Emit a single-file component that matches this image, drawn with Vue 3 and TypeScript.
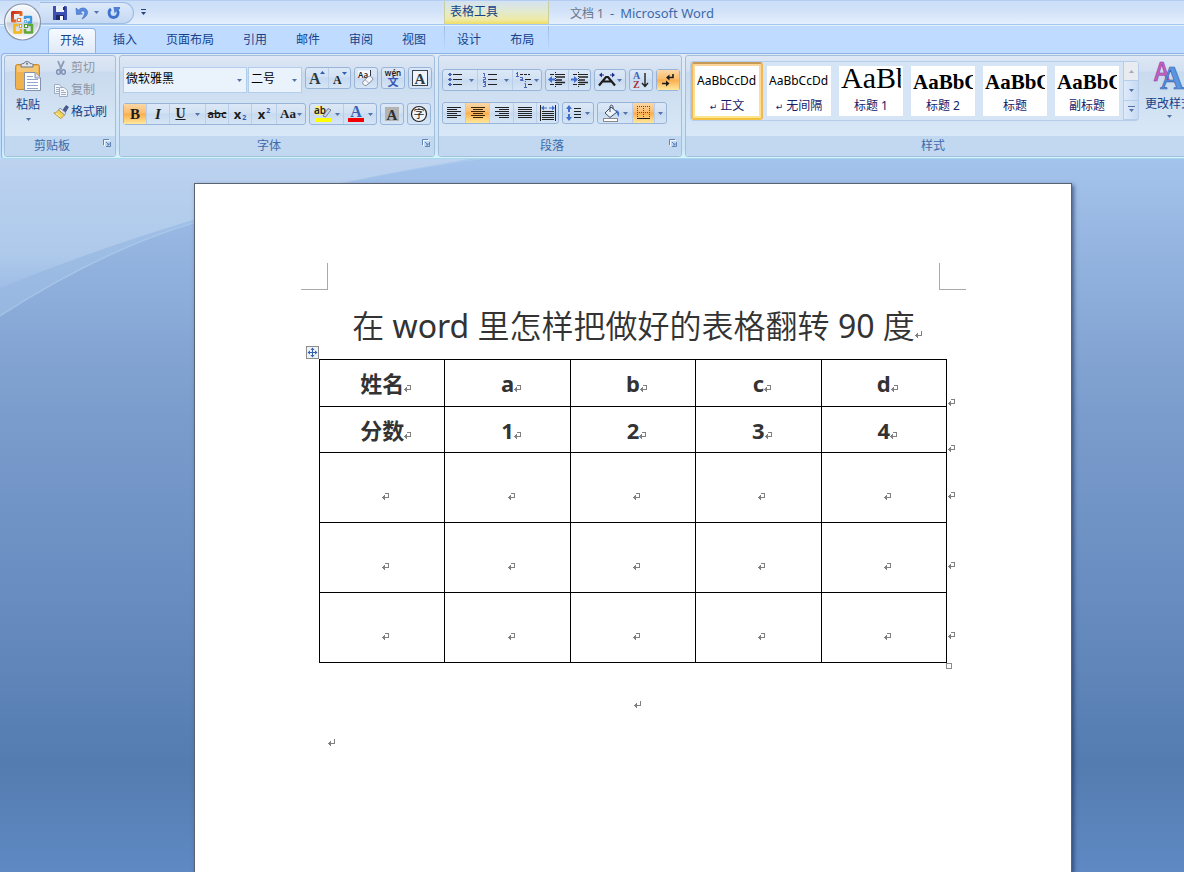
<script setup lang="ts">
import { h, ref } from 'vue'

interface StyleItem {
  name: string
  sample: string
  kind: string
  mark: boolean
}

const Caret = () =>
  h('svg', { class: 'caret', viewBox: '0 0 5 3', width: 5, height: 3, 'aria-hidden': 'true' }, [
    h('path', { d: 'M0 0H5L2.5 3Z', fill: '#5273a8' }),
  ])

const CellMark = () =>
  h('svg', { class: 'mark', viewBox: '0 0 7 7', width: 7, height: 7, 'aria-hidden': 'true' }, [
    h('path', { d: 'M3 0H7V5H3V7H2V6H1V5H0V4H1V3H2V2H3V4H6V1H3Z', fill: '#808080' }),
  ])

const ParaMark = () =>
  h('svg', { class: 'mark', viewBox: '0 0 7 7', width: 7, height: 7, 'aria-hidden': 'true' }, [
    h('path', { d: 'M6 0H7V5H3V7H2V6H1V5H0V4H1V3H2V2H3V4H6Z', fill: '#808080' }),
  ])

const Launcher = () =>
  h('svg', { viewBox: '0 0 9 9', width: 9, height: 9, 'aria-hidden': 'true' }, [
    h('path', { d: 'M.5 6V.5H6', fill: 'none', stroke: '#5f84b5' }),
    h('path', { d: 'M7.500 3V7.500H3M3 3L6 6M6 4V6H4', fill: 'none', stroke: '#5f84b5' }),
    h('path', { d: 'M1.500 7V1.500H7', fill: 'none', stroke: '#fff', 'stroke-opacity': '0.8' }),
  ])

const tabs = ['开始', '插入', '页面布局', '引用', '邮件', '审阅', '视图']
const contextTabs = ['设计', '布局']
const activeTab = ref('开始')

const fontName = ref('微软雅黑')
const fontSize = ref('二号')

const styles: StyleItem[] = [
  { name: '正文', sample: 'AaBbCcDd', kind: 'body', mark: true },
  { name: '无间隔', sample: 'AaBbCcDd', kind: 'body', mark: true },
  { name: '标题 1', sample: 'AaBb', kind: 'h1', mark: false },
  { name: '标题 2', sample: 'AaBbC', kind: 'h2', mark: false },
  { name: '标题', sample: 'AaBbC', kind: 'h2', mark: false },
  { name: '副标题', sample: 'AaBbC', kind: 'h2', mark: false },
]
const activeStyle = ref('正文')

const head = ['姓名', 'a', 'b', 'c', 'd']
const scores = ['分数', '1', '2', '3', '4']
</script>

<template>
  <div class="app">
    <header class="top">
      <div class="titlebar">
        <div class="qat-zone">
          <div class="qat">
            <button class="plain" type="button" aria-label="保存">
              <svg width="14" height="14" viewBox="0 0 14 14">
                <path d="M0 0H13L14 1V14H0Z" fill="#3d4fb0" />
                <rect x="3" y="0" width="8" height="6" fill="#e9effb" />
                <rect x="10" y="1" width="2" height="3" fill="#1f2f7c" />
                <rect x="3" y="9" width="8" height="5" fill="#1d2a66" />
                <rect x="7" y="10" width="3" height="4" fill="#fff" />
              </svg>
            </button>
            <button class="plain undo" type="button" aria-label="撤消">
              <svg width="14" height="14" viewBox="0 0 14 14">
                <path d="M1 2L1.500 8.500L7.500 8L5.500 6.200C8 3.800 10.500 5 9.500 8C9 10 8 11.500 7 13C11 11 13 8.500 12.500 5.500C11.500 1.500 7 .8 3.300 4Z" fill="#5a8be0" stroke="#3a66b8" stroke-width=".6" />
              </svg>
            </button>
            <button class="plain" type="button" aria-label="撤消列表"><Caret /></button>
            <button class="plain redo" type="button" aria-label="重复">
              <svg width="14" height="14" viewBox="0 0 14 14">
                <path d="M4 3C.8 5 1.500 11.500 6.500 11.500C11.500 11.500 12 6 10 3.500" fill="none" stroke="#3f72cc" stroke-width="2.800" />
                <path d="M6.500 1H13V3L10.500 4L7.500 7.500Z" fill="#4f80d4" />
              </svg>
            </button>
          </div>
          <button class="plain qat-more" type="button" aria-label="自定义快速访问工具栏">
            <svg width="7" height="7" viewBox="0 0 7 7"><path d="M1 0H6V1H1ZM1 3H6L3.500 6Z" fill="#24467e" /></svg>
          </button>
        </div>
        <div class="context-title">表格工具</div>
        <h1 class="window-title"><span class="doc">文档 1</span><span>-</span><span>Microsoft Word</span></h1>
      </div>

      <nav class="tabs">
        <div class="tab-set">
          <button
            v-for="t in tabs"
            :key="t"
            type="button"
            class="tab"
            :class="{ active: t === activeTab }"
            @click="activeTab = t"
          >{{ t }}</button>
        </div>
        <div class="tab-set context">
          <button
            v-for="t in contextTabs"
            :key="t"
            type="button"
            class="tab"
            :class="{ active: t === activeTab }"
            @click="activeTab = t"
          >{{ t }}</button>
        </div>
      </nav>

      <button class="office" type="button" aria-label="Office 按钮">
        <svg width="38" height="38" viewBox="0 0 38 38">
          <defs>
            <linearGradient id="orb" x1="0" y1="0" x2="0" y2="1">
              <stop offset="0" stop-color="#f7f9fd" />
              <stop offset=".48" stop-color="#e3e8f1" />
              <stop offset=".54" stop-color="#c6cfdd" />
              <stop offset="1" stop-color="#ffffff" />
            </linearGradient>
            <linearGradient id="or" x1="0" y1="0" x2="1" y2="1">
              <stop offset="0" stop-color="#c8301a" /><stop offset="1" stop-color="#f58a2a" />
            </linearGradient>
          </defs>
          <circle cx="18.500" cy="19" r="18" fill="url(#orb)" stroke="#8996ad" stroke-width="1.200" />
          <circle cx="18.500" cy="19" r="16.500" fill="none" stroke="#fff" stroke-opacity=".7" />
          <g fill="none" stroke-linejoin="round">
            <path d="M17 13V9.500H8.500V18H12.500" stroke="url(#or)" stroke-width="3" />
            <path d="M21 16V14H27V19.500H23.500" stroke="#3d97dc" stroke-width="2.400" />
            <path d="M14.500 22H10.500V29.500H17V26" stroke="#f6b61e" stroke-width="2.600" />
            <path d="M24 22H28V29.500H21V26" stroke="#5fa838" stroke-width="2.600" />
          </g>
          <path d="M13 15H17V19H13Z" fill="#f07a3a" /><path d="M14 16H16V18H14Z" fill="#fff" />
          <path d="M20 17H23V20H20Z" fill="#6bb3e8" /><path d="M21 18H22V19H21Z" fill="#fff" />
          <path d="M15 21H18V25H15Z" fill="#e8a417" /><path d="M16 22H17V24H16Z" fill="#fff" />
          <path d="M20 21H24V25H20Z" fill="#4b9a3a" /><path d="M21 22H23V24H21Z" fill="#fff" />
        </svg>
      </button>
    </header>

    <section class="ribbon">
      <div class="group clip">
        <div class="body clip-body">
          <button class="big" type="button">
            <svg width="28" height="32" viewBox="0 0 28 32">
              <rect x="1.500" y="4.500" width="24" height="25" rx="2" fill="#efb24d" stroke="#c98a2e" />
              <path d="M3 6H24V12H3Z" fill="#f8cf85" opacity=".7" />
              <path d="M7 7V5C7 4 8 3.500 10 3.500C10 1 16 1 16 3.500C18 3.500 19 4 19 5V7Z" fill="#dfe3ea" stroke="#6f7684" />
              <circle cx="13" cy="3.800" r="1" fill="#6f7684" />
              <path d="M10.500 12.500H21L26.500 18V30.500H10.500Z" fill="#fff" stroke="#8493ad" />
              <path d="M21 12.500V18H26.500" fill="#d7e0ef" stroke="#8493ad" />
              <path d="M13 16.500H19M13 19.500H24M13 22.500H24M13 25.500H24M13 28.500H24" stroke="#8da6cf" />
            </svg>
            <span>粘贴</span>
            <Caret />
          </button>
          <div class="small-stack">
            <button class="small off" type="button">
              <svg width="16" height="16" viewBox="0 0 16 16" fill="none">
                <path d="M5 1L8.500 9.500M11 1L7 9.500" stroke="#8d9db6" stroke-width="1.800" />
                <ellipse cx="5.500" cy="12" rx="1.800" ry="2.300" stroke="#7f92b4" stroke-width="1.500" />
                <ellipse cx="10.500" cy="12" rx="1.800" ry="2.300" stroke="#7f92b4" stroke-width="1.500" />
              </svg>
              剪切
            </button>
            <button class="small off" type="button">
              <svg width="16" height="16" viewBox="0 0 16 16" fill="#f3f6fb" stroke="#9fadc4">
                <path d="M1.500 2.500H6L9.500 5.500V11.500H1.500Z" /><path d="M3 5.500H6M3 7.500H6M3 9.500H6" />
                <path d="M6.500 5.500H11L14.500 8.500V14.500H6.500Z" /><path d="M8 8.500H11M8 10.500H13M8 12.500H13" />
              </svg>
              复制
            </button>
            <button class="small" type="button">
              <svg width="16" height="16" viewBox="0 0 16 16">
                <path d="M10 6L13 1.500L15.500 3L12.500 8Z" fill="#4b5a90" stroke="#2f3c70" stroke-width=".6" />
                <path d="M7 4L13 9L11.500 11L5.500 6Z" fill="#dfe4ee" stroke="#6c7994" stroke-width=".7" />
                <path d="M5.500 6L11.500 11C10 13 8.500 14 7.500 14.500L.8 9C3 8.500 4.500 7.500 5.500 6Z" fill="#f0d25c" stroke="#a8842a" stroke-width=".7" />
                <path d="M3 9.500L7 12.500" stroke="#fff3b8" />
              </svg>
              格式刷
            </button>
          </div>
        </div>
        <footer class="label"><span>剪贴板</span><button class="plain" type="button" aria-label="剪贴板选项"><Launcher /></button></footer>
      </div>

      <div class="group font">
        <div class="body rows font-rows">
          <div class="row">
            <div class="combos">
              <div class="combo name-box">
                <select v-model="fontName" aria-label="字体"><option>微软雅黑</option><option>宋体</option></select><Caret />
              </div>
              <div class="combo size-box">
                <select v-model="fontSize" aria-label="字号"><option>二号</option><option>三号</option></select><Caret />
              </div>
            </div>
            <div class="set">
              <button type="button" class="w22" aria-label="增大字体">
                <svg width="18" height="18" viewBox="0 0 18 18"><text x="1" y="15" class="serif" font-size="16" fill="#2c3a44">A</text><path d="M12 5H17L14.500 2Z" fill="#2f5fb5" /></svg>
              </button>
              <button type="button" class="w22" aria-label="缩小字体">
                <svg width="18" height="18" viewBox="0 0 18 18"><text x="2" y="15" class="serif" font-size="12" fill="#222">A</text><path d="M11 3H16L13.500 6Z" fill="#2f5fb5" /></svg>
              </button>
            </div>
            <div class="set"><button type="button" class="w22" aria-label="清除格式">
              <svg width="18" height="18" viewBox="0 0 18 18">
                <path d="M1 1.500H14V9H1Z" fill="#fff" opacity=".8" />
                <text x="1" y="9" class="sans semi" font-size="8" fill="#222">Aa</text><path d="M13.500 1V7" stroke="#334" />
                <path d="M6 12.500L11 8C12 7 13.500 7 14.500 8C16 9.500 16 10.500 15 11.500L10 16C9 17 7.500 16.500 6.500 15.500C5.500 14.500 5.200 13.500 6 12.500Z" fill="#f5f7fa" stroke="#7c899f" /><path d="M8 10.500L12 14.500" stroke="#9aa5b8" />
              </svg>
            </button></div>
            <div class="set"><button type="button" class="w22" aria-label="拼音指南">
              <svg width="18" height="20" viewBox="0 0 18 20"><text x="9" y="8" text-anchor="middle" class="sans semi" font-size="8" fill="#222">wén</text><text x="9" y="18" text-anchor="middle" class="cjk bold" font-size="11" fill="#3558b8">文</text></svg>
            </button></div>
            <div class="set"><button type="button" class="w22" aria-label="字符边框">
              <svg width="18" height="18" viewBox="0 0 18 18"><rect x="1.500" y="1.500" width="15" height="15" fill="#eef4fb" stroke="#3a4450" /><text x="9" y="15" text-anchor="middle" class="serif" font-size="15" fill="#2c3a44">A</text></svg>
            </button></div>
          </div>
          <div class="row">
            <div class="set">
              <button type="button" class="w22 on glyph b" aria-label="加粗">B</button>
              <button type="button" class="w23 glyph i" aria-label="倾斜">I</button>
              <button type="button" class="w36 glyph u" aria-label="下划线"><u>U</u><Caret /></button>
              <button type="button" class="w23 glyph s" aria-label="删除线"><s>abc</s></button>
              <button type="button" class="w23 glyph x" aria-label="下标">x<sub>2</sub></button>
              <button type="button" class="w25 glyph x" aria-label="上标">x<sup>2</sup></button>
              <button type="button" class="w29 glyph aa" aria-label="更改大小写">Aa<Caret /></button>
            </div>
            <div class="set">
              <button type="button" class="w33" aria-label="突出显示">
                <svg width="18" height="18" viewBox="0 0 18 18">
                  <rect x="1" y="1" width="9" height="9" fill="#fbf27a" /><text x="0" y="9" class="sans semi" font-size="10" fill="#222">ab</text>
                  <path d="M9 11L14 3.500L17 5L11.500 12Z" fill="#c9d2de" stroke="#5b6b82" stroke-width=".8" /><rect x="1" y="13" width="16" height="4" fill="#ffff00" />
                </svg><Caret />
              </button>
              <button type="button" class="w33" aria-label="字体颜色">
                <svg width="18" height="18" viewBox="0 0 18 18"><text x="9" y="12" text-anchor="middle" class="serif" font-size="16" fill="#3a62b0">A</text><rect x="1" y="13" width="16" height="4" fill="#f00000" /></svg><Caret />
              </button>
            </div>
            <div class="set"><button type="button" class="w22" aria-label="字符底纹">
              <svg width="18" height="18" viewBox="0 0 18 18"><rect x="2" y="2" width="14" height="14" fill="#b3b3b3" /><text x="9" y="15" text-anchor="middle" class="serif" font-size="15" fill="#2c3034">A</text></svg>
            </button></div>
            <div class="set"><button type="button" class="w22" aria-label="带圈字符">
              <svg width="18" height="18" viewBox="0 0 18 18"><circle cx="9" cy="9" r="7.500" fill="#eef4fb" stroke="#222" stroke-width="1.200" /><text x="9" y="13" text-anchor="middle" class="cjk" font-size="11" fill="#222">字</text></svg>
            </button></div>
          </div>
        </div>
        <footer class="label"><span>字体</span><button class="plain" type="button" aria-label="字体选项"><Launcher /></button></footer>
      </div>

      <div class="group para">
        <div class="body rows para-rows">
          <div class="row">
            <div class="set lists">
              <button type="button" class="w34" aria-label="项目符号">
                <svg width="16" height="16" viewBox="0 0 16 16"><path d="M6 2.500H15M6 7.500H15M6 12.500H15" stroke="#222" /><path d="M2 1H4V4H2ZM2 6H4V9H2ZM2 11H4V14H2ZM1 2H5V3H1ZM1 7H5V8H1ZM1 12H5V13H1Z" fill="#4a63b5" /></svg><Caret />
              </button>
              <button type="button" class="w35" aria-label="编号">
                <svg width="16" height="16" viewBox="0 0 16 16"><path d="M6 2.500H15M6 7.500H15M6 12.500H15" stroke="#222" /><path d="M1 1.500H2.500V4.500M1 5.500H3.500V7.500H1.500V9.500H4M1 10.500H3.500V12.500H2M3.500 12.500V14.500H1" stroke="#4a63b5" fill="none" /></svg><Caret />
              </button>
              <button type="button" class="w29" aria-label="多级列表">
                <svg width="18" height="16" viewBox="0 0 18 16"><path d="M5 2.500H8M9 2.500H12M13 2.500H15M10 7.500H16M13 12.500H17" stroke="#222" /><path d="M2.500 0V4M1 1.500H2.500M1 4.500H4M5 5.500H7.500V9M7.500 7.500H5.500V8.500H8.500M10.500 9V10M9.500 11.500H10.500V15M9 15.500H12" stroke="#4a63b5" fill="none" /></svg><Caret />
              </button>
            </div>
            <div class="set">
              <button type="button" class="w22" aria-label="减少缩进">
                <svg width="18" height="16" viewBox="0 0 18 16"><path d="M2 2.500H6M8 2.500H17M2 12.500H6M8 12.500H14" stroke="#222" /><path d="M8 5H17M8 8H14M8 10.500H17" stroke="#222" stroke-width="1.600" /><path d="M7.500 0V16" stroke="#222" stroke-dasharray="1 1" /><path d="M0 7.500L4 4V6.500H7V8.500H4V11Z" fill="#3f6ed0" /></svg>
              </button>
              <button type="button" class="w22" aria-label="增加缩进">
                <svg width="18" height="16" viewBox="0 0 18 16"><path d="M2 2.500H6M8 2.500H17M2 12.500H6M8 12.500H14" stroke="#222" /><path d="M8 5H17M8 8H14M8 10.500H17" stroke="#222" stroke-width="1.600" /><path d="M7.500 0V16" stroke="#222" stroke-dasharray="1 1" /><path d="M7 7.500L3 4V6.500H0V8.500H3V11Z" fill="#3f6ed0" /></svg>
              </button>
            </div>
            <div class="set"><button type="button" class="w30 tight" aria-label="中文版式">
              <svg width="18" height="16" viewBox="0 0 18 16"><path d="M1 13.500L8 5H10L17 13.500M5 9.500H13" stroke="#1c1c1c" stroke-width="2.200" fill="none" /><path d="M1 3L4 .5V5.500ZM4 2.500H6V3.500H4ZM17 3L14 .5V5.500ZM12 2.500H14V3.500H12Z" fill="#20308f" /></svg><Caret />
            </button></div>
            <div class="set"><button type="button" class="w22" aria-label="排序">
              <svg width="18" height="18" viewBox="0 0 18 18"><text x="1" y="8" class="serif" font-size="10" fill="#3d62b5">A</text><text x="1" y="17" class="serif" font-size="10" fill="#a83236">Z</text><path d="M13 2V15M10 12L13 15.500L16 12" stroke="#222" stroke-width="1.400" fill="none" /></svg>
            </button></div>
            <div class="set"><button type="button" class="w22 on" aria-label="显示编辑标记">
              <svg width="18" height="18" viewBox="0 0 18 18"><path d="M14 3V6.500H10" stroke="#1c1c1c" stroke-width="1.600" fill="none" /><path d="M7 6.500L10.500 3.500V9.500ZM10.500 12.500L7 9.500V15.500Z" fill="#1c1c1c" /><path d="M3 12.500H8" stroke="#1c1c1c" stroke-width="1.400" /></svg>
            </button></div>
          </div>
          <div class="row">
            <div class="set">
              <button type="button" class="w22" aria-label="左对齐"><svg width="16" height="14" viewBox="0 0 16 14"><path d="M1 1.500H15M1 3.500H11M1 5.500H15M1 7.500H11M1 9.500H15M1 11.500H11" stroke="#222" /></svg></button>
              <button type="button" class="w24 on" aria-label="居中"><svg width="16" height="14" viewBox="0 0 16 14"><path d="M1 1.500H15M3 3.500H13M1 5.500H15M3 7.500H13M1 9.500H15M3 11.500H13" stroke="#3c2407" /></svg></button>
              <button type="button" class="w24" aria-label="右对齐"><svg width="16" height="14" viewBox="0 0 16 14"><path d="M1 1.500H15M5 3.500H15M1 5.500H15M5 7.500H15M1 9.500H15M5 11.500H15" stroke="#222" /></svg></button>
              <button type="button" class="w23" aria-label="两端对齐"><svg width="16" height="14" viewBox="0 0 16 14"><path d="M1 1.500H15M1 3.500H15M1 5.500H15M1 7.500H15M1 9.500H15M1 11.500H15" stroke="#222" /></svg></button>
              <button type="button" class="w22" aria-label="分散对齐"><svg width="16" height="16" viewBox="0 0 16 16"><path d="M.5 0V16M15.500 0V16" stroke="#222" /><path d="M2 6.500H14M2 8.500H14M2 10.500H14M2 12.500H14M2 14.500H14" stroke="#222" /><path d="M1 3L4 .500V5.500ZM15 3L12 .500V5.500ZM4 2.500H7V3.500H4ZM9 2.500H12V3.500H9Z" fill="#3f6ed0" /></svg></button>
            </div>
            <div class="set"><button type="button" class="w30" aria-label="行距">
              <svg width="16" height="16" viewBox="0 0 16 16"><path d="M8 3.500H15M8 6.500H15M8 9.500H15M8 12.500H15" stroke="#222" /><path d="M3 0L6 4H4V7H2V4H0ZM3 16L6 12H4V9H2V12H0Z" fill="#3f6ed0" /></svg><Caret />
            </button></div>
            <div class="set">
              <button type="button" class="w34" aria-label="底纹">
                <svg width="18" height="18" viewBox="0 0 18 18"><path d="M3 9L9 3L15 8L8 13.500Z" fill="#eef3fa" stroke="#3d4b60" /><path d="M8 8V3C8 .5 11 .5 11 3V5" fill="none" stroke="#3d4b60" /><path d="M13 6C17 6 18 9 16.500 13C15.500 11 15 9 13 6Z" fill="#3f6ed0" /><rect x="1.500" y="14.500" width="14" height="3" fill="#fff" stroke="#8a8a8a" /></svg><Caret />
              </button>
              <button type="button" class="w22 on" aria-label="边框">
                <svg width="14" height="14" viewBox="0 0 14 14"><path d="M.5 0V13M6.500 0V13M12.500 0V13M0 .5H13M0 6.500H13" stroke="#6b4a1c" stroke-dasharray="1 1" /><path d="M0 12.500H13" stroke="#1c1c1c" /></svg>
              </button>
              <button type="button" class="w12" aria-label="边框列表"><Caret /></button>
            </div>
          </div>
        </div>
        <footer class="label"><span>段落</span><button class="plain" type="button" aria-label="段落选项"><Launcher /></button></footer>
      </div>

      <div class="group styles">
        <div class="body styles-body">
          <div class="gallery">
            <button
              v-for="s in styles"
              :key="s.name"
              type="button"
              class="style"
              :class="{ chosen: s.name === activeStyle }"
              @click="activeStyle = s.name"
            >
              <span class="card">
                <span class="sample" :class="s.kind">{{ s.sample }}</span>
                <span class="name"><span v-if="s.mark" class="ret">↵</span> {{ s.name }}</span>
              </span>
            </button>
            <div class="scroller">
              <button type="button" class="dim" aria-label="上一行"><svg width="5" height="3" viewBox="0 0 5 3"><path d="M0 3H5L2.500 0Z" fill="#a3a9b3" /></svg></button>
              <button type="button" aria-label="下一行"><Caret /></button>
              <button type="button" aria-label="其他"><svg width="7" height="7" viewBox="0 0 7 7"><path d="M0 0H7V1H0ZM1 3H6L3.500 6Z" fill="#5273a8" /></svg></button>
            </div>
          </div>
          <button class="big change" type="button">
            <svg width="34" height="32" viewBox="0 0 34 32">
              <text x="2" y="20" class="cjk" font-size="25" font-weight="500" fill="#c45fc4" stroke="#8c3f9c" stroke-width=".6">A</text>
              <text x="8" y="28" class="serif" font-size="33" fill="#5c94e0" stroke="#2d5ca8" stroke-width=".6">A</text>
            </svg>
            <span>更改样式</span>
            <Caret />
          </button>
        </div>
        <footer class="label"><span>样式</span></footer>
      </div>
    </section>

    <main class="workspace">
      <svg class="swoosh" width="500" height="170" viewBox="0 0 500 170" aria-hidden="true">
        <defs>
          <linearGradient id="sw" x1="0" y1="0" x2="0" y2="1">
            <stop offset="0" stop-color="#bfd4f0" stop-opacity=".9" />
            <stop offset=".75" stop-color="#b3cdec" stop-opacity=".75" />
            <stop offset="1" stop-color="#a3c0ea" stop-opacity=".6" />
          </linearGradient>
        </defs>
        <path d="M0 0H480Q350 16 193 64Q100 94 0 157Z" fill="#a9c8ea" opacity=".45" />
        <path d="M0 157Q100 92 193 64Q350 16 480 0" fill="none" stroke="#b4cdf0" stroke-opacity=".5" stroke-width="1.500" />
        <path d="M0 0H470Q300 28 193 61Q90 92 0 129Z" fill="url(#sw)" />
      </svg>

      <article class="page">
        <div class="crops"><i class="crop tl"></i><i class="crop tr"></i></div>
        <h2 class="heading"><span class="han">在</span> word <span class="han">里怎样把做好的表格翻转</span> 90 <span class="han">度</span><ParaMark /></h2>
        <div class="table-wrap">
          <svg class="move" width="13" height="13" viewBox="0 0 13 13" aria-hidden="true">
            <rect x=".5" y=".5" width="12" height="12" fill="#eef2fa" stroke="#8c8c8c" />
            <path d="M3 6.500H10M6.500 3V10" stroke="#3461b0" />
            <path d="M6.500 1.500L8.500 4H4.500ZM6.500 11.500L4.500 9H8.500ZM1.500 6.500L4 4.500V8.500ZM11.500 6.500L9 8.500V4.500Z" fill="#3461b0" />
          </svg>
          <table>
            <thead>
              <tr>
                <th v-for="(c, i) in head" :key="c" scope="col">{{ c }}<CellMark /><span v-if="i === 4" class="row-end low"><CellMark /></span></th>
              </tr>
            </thead>
            <tbody>
              <tr class="scores">
                <td v-for="(c, i) in scores" :key="c">{{ c }}<CellMark /><span v-if="i === 4" class="row-end low"><CellMark /></span></td>
              </tr>
              <tr v-for="r in 3" :key="r" class="blank">
                <td v-for="c in 5" :key="c"><CellMark /><span v-if="c === 5" class="row-end"><CellMark /></span></td>
              </tr>
            </tbody>
          </table>
          <i class="resize"></i>
        </div>
        <p class="para-line centered"><ParaMark /></p>
        <p class="para-line"><ParaMark /></p>
      </article>
    </main>
  </div>
</template>

<style>
body { margin: 0; overflow: hidden; }
</style>

<style scoped>
.app {
  display: flex;
  flex-direction: column;
  min-height: 100vh;
  overflow: hidden;
  font: 12px/16px "Noto Sans", "Noto Sans CJK SC", sans-serif;
  color: #15428b;
  background: #bfdbff;
}
.app *, .app *::before { box-sizing: border-box; }
button { font: inherit; color: inherit; border: 0; padding: 0; margin: 0; background: none; white-space: nowrap; }
svg { display: block; flex: none; overflow: visible; }
.plain { display: flex; align-items: center; justify-content: center; }
.serif { font-family: "Liberation Serif", serif; font-weight: bold; }
.sans { font-family: "Noto Sans", sans-serif; }
.semi { font-weight: 600; }
.cjk { font-family: "Noto Sans CJK SC", sans-serif; }
.bold { font-weight: bold; }

.top { position: relative; }
.titlebar {
  display: flex;
  height: 25px;
  border-top: 1px solid #b4cdf0;
  border-bottom: 1px solid #a5c8ee;
  background: linear-gradient(#cbdff8, #d2e2f8 45%, #e4effd);
}
.qat-zone { display: flex; align-items: center; width: 444px; padding-left: 40px; }
.qat {
  display: flex;
  align-items: center;
  width: 94px;
  height: 22px;
  padding-left: 13px;
  border: 1px solid #9dbbe3;
  border-left: 0;
  border-radius: 0 11px 11px 0;
  background: linear-gradient(#dce9fa, #c5d9f3);
}
.undo { margin: 0 5px 0 8px; }
.redo { margin-left: 8px; }
.qat-more { margin-left: 6px; }
.context-title {
  width: 105px;
  padding: 3px 5px;
  border-left: 1px solid #c9cf9f;
  border-right: 1px solid #c9cf9f;
  background: linear-gradient(#d3e2f3, #e2eacf 45%, #efeaa6 80%, #f0de66);
}
.window-title { display: flex; gap: 6px; margin: 4px 0 0 21px; font-size: 13px; line-height: 17px; font-weight: normal; color: #3e6aaa; }
.doc { font-size: 12px; color: #69748a; }
.office { position: absolute; left: 4px; top: 3px; }

.tabs { display: flex; height: 28px; padding-left: 48px; border-top: 1px solid #e3effd; }
.tab-set { display: flex; gap: 5px; align-items: flex-end; }
.context {
  margin-left: 6px;
  width: 105px;
  border: 1px solid;
  border-width: 0 1px;
  border-image: linear-gradient(#9fb9d8, #bfdbff 90%) 1;
}
.tab { height: 25px; padding: 0 12px 1px; border: 1px solid transparent; border-width: 1px 0; }
.tab.active {
  padding: 0 11px 1px;
  border: 1px solid #8db2e3;
  border-bottom: 0;
  border-radius: 4px 4px 0 0;
  background: linear-gradient(#f6faff, #dfeaf8);
}

.ribbon {
  display: flex;
  gap: 3px;
  height: 106px;
  margin-left: 1px;
  padding: 1px 0 1px 2px;
  overflow: hidden;
  border: 1px solid #8db2e3;
  border-right: 0;
  border-bottom-color: #a5d8ee;
  border-radius: 4px 0 0 4px;
  background: linear-gradient(#e0eaf6, #c9e4f8 90%, #d5f4fb);
}
.group {
  display: flex;
  flex: none;
  flex-direction: column;
  border: 1px solid #a3bfdc;
  border-radius: 3px;
  background: linear-gradient(#dee8f5 0, #d3e0f1 15%, #c9daee 16%, #d8e8f7 80%);
}
.clip { width: 112px; }
.font { width: 316px; }
.para { width: 244px; }
.styles { width: 512px; }
.body { flex: 1; display: flex; min-height: 0; }
.label {
  display: grid;
  grid-template-columns: 1fr 16px;
  align-items: center;
  height: 20px;
  background: #c1d8f0;
  color: #3e6aaa;
  border-radius: 0 0 3px 3px;
}
.label span { text-align: center; }
.label button { align-self: start; margin-top: 3px; }

.big { display: flex; flex-direction: column; align-items: center; gap: 5px; width: 46px; padding-top: 4px; }
.clip-body { gap: 2px; }
.small-stack { display: flex; flex-direction: column; padding-top: 1px; }
.small { display: flex; align-items: center; gap: 2px; height: 22px; }
.off { color: #8b95a5; }

.rows { flex-direction: column; }
.font-rows { padding: 11px 3px 0; gap: 11px; }
.para-rows { padding: 13px 3px 0; gap: 11px; }
.row { display: flex; gap: 3px; align-items: flex-start; }
.font-rows .row:first-child { height: 25px; }
.combos { display: flex; gap: 1px; }
.combo { display: grid; grid-template-columns: 1fr 13px; align-items: center; height: 26px; border: 1px solid #b3cdec; background: #eaf2fb; }
.combo select {
  grid-area: 1 / 1 / 2 / 3;
  width: 100%;
  height: 24px;
  padding: 0 0 2px 2px;
  appearance: none;
  border: 0;
  background: none;
  color: #000;
  font: inherit;
}
.combo .caret { grid-area: 1 / 2; justify-self: center; pointer-events: none; }
.name-box { width: 124px; }
.size-box { width: 54px; }
.set {
  display: flex;
  height: 22px;
  border: 1px solid #98b4d8;
  border-radius: 3px;
  background: linear-gradient(#dce8f6 0, #d2e1f3 45%, #c8daf0 50%, #d5e5f6);
}
.set button { display: flex; align-items: center; justify-content: center; gap: 3px; }
.set button + button { border-left: 1px solid #b9ceea; }
.lists button { gap: 6px; }
.set .on { background: linear-gradient(#fbd7a6, #fcbc6c 45%, #fbad4c 50%, #fee89c); }
.w12 { width: 12px; }
.w22 { width: 22px; }
.w23 { width: 23px; }
.w24 { width: 24px; }
.w25 { width: 25px; }
.w29 { width: 29px; }
.w30 { width: 30px; }
.w33 { width: 33px; }
.w34 { width: 34px; }
.w35 { width: 35px; }
.w36 { width: 36px; }
.set .w29, .set .tight { gap: 1px; }
.glyph { font-family: "Liberation Serif", serif; font-weight: bold; color: #1c1c1c; }
.b, .i { font-size: 15px; }
.i { font-style: italic; }
.u { font-size: 14px; }
.set .u { gap: 9px; }
.s { font-family: "Noto Sans", sans-serif; font-size: 11px; font-weight: 600; }
.x { font-family: "Noto Sans", sans-serif; font-size: 13px; }
.set .x { gap: 1px; }
.x sub, .x sup { font-size: 7px; line-height: 8px; color: #3558b8; }
.x sub { align-self: flex-end; margin-bottom: 2px; }
.x sup { align-self: flex-start; margin-top: 3px; }
.aa { font-size: 13px; }

.styles-body { padding: 5px 0 0 4px; gap: 3px; }
.gallery { display: flex; width: 450px; height: 60px; border: 1px solid #b5cdea; border-radius: 3px; background: #d6e5f6; }
.style { width: 72px; height: 58px; padding: 1px; border: 3px solid transparent; border-radius: 3px; }
.style.chosen { border-width: 2px; padding: 2px; border-color: #c49a58 #f0b858 #f3c13f #f0b858; background: linear-gradient(#fbd49a, #fde58c); }
.card { display: flex; flex-direction: column; width: 64px; height: 50px; padding: 0 2px; overflow: hidden; background: #fff; }
.sample { height: 31px; overflow: hidden; color: #000; text-align: left; }
.sample.body { display: block; line-height: 30px; }
.h1 { font: 30px/24px "Liberation Serif", serif; }
.h2 { font: bold 21px/32px "Liberation Serif", serif; }
.name { color: #15206b; text-align: center; line-height: 18px; }
.ret { font-family: "DejaVu Sans", sans-serif; font-size: 9px; }
.scroller { display: flex; flex-direction: column; width: 15px; margin-left: auto; }
.scroller button { flex: 1; display: flex; align-items: center; justify-content: center; border: 1px solid #b5cdea; border-width: 0 0 1px 1px; background: linear-gradient(90deg, #dfeafa, #c7daf3); }
.scroller .dim { background: #e8ebf0; }
.change { width: 54px; padding-top: 0; gap: 3px; }

.workspace {
  position: relative;
  flex: 1;
  display: flex;
  padding: 24px 112px 0 194px;
  background: linear-gradient(#a4c3ec 0, #8dadda 19%, #7b9dcd 35%, #688cc0 62%, #547cb0 85%, #5f89c3);
}
.swoosh { position: absolute; left: 0; top: 0; }
.page {
  position: relative;
  flex: 1;
  min-width: 0;
  padding: 79px 132px 0 133px;
  border: 1px solid #5b6270;
  border-bottom: 0;
  background: #fff;
  box-shadow: 2px 2px 4px rgba(20, 40, 80, .6);
  color: #333;
}
.crops { display: flex; justify-content: space-between; margin: 0 -27px; }
.crop { width: 27px; height: 27px; border: 0 solid #aaa; border-bottom-width: 1px; }
.tl { border-right-width: 1px; }
.tr { border-left-width: 1px; }
.mark { display: inline-block; margin-right: -7px; }
.heading { margin: 10px 0 0; font-size: 32px; line-height: 48px; font-weight: normal; text-align: center; white-space: nowrap; }
.han { font-family: "Noto Sans CJK SC", sans-serif; font-weight: 350; }
.table-wrap { position: relative; margin: 9px -8px 0 -9px; }
table { width: 100%; table-layout: fixed; border-collapse: collapse; }
th, td { position: relative; height: 46px; padding: 0; border: 1px solid #000; font-size: 22px; line-height: 32px; font-weight: bold; text-align: center; }
th { height: 47px; }
.blank td { height: 70px; padding-top: 6px; }
.row-end { position: absolute; right: -2px; top: 16px; bottom: 0; display: flex; align-items: center; width: 0; }
.row-end.low { top: 38px; }
.move { position: absolute; left: -13px; top: -13px; }
.resize { position: absolute; right: -5px; bottom: -6px; width: 6px; height: 6px; border: 1px solid #8c8c8c; background: #fff; }
.para-line { display: flex; align-items: center; height: 38px; margin: 0; }
.centered { margin-top: 22px; justify-content: center; }
</style>
